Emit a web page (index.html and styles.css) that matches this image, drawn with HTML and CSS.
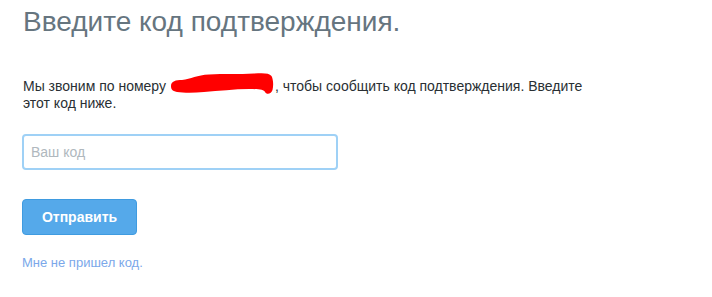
FILE: index.html
```html
<!DOCTYPE html>
<html lang="ru">
<head>
<meta charset="utf-8">
<title>Введите код подтверждения</title>
<link rel="stylesheet" href="styles.css">
</head>
<body>
<main class="page">
  <h1 class="title">Введите код подтверждения.</h1>
  <p class="lead">Мы звоним по номеру <span class="redact"><svg class="redact-mark" width="108" height="26" viewBox="0 0 108 26" aria-hidden="true"><path d="M2,15 C2,10 7,9 13,9 C22,8 28,4 40,3.5 C55,2.5 70,3.5 85,2.5 C95,2 100,2 102.5,5 C104.5,9 104.5,15 103.5,19 C102.5,23 97.5,24 96,21 C95,18.5 90,18 80,18 C65,18 50,20 35,21 C25,22 15,22 8,21 C3,20 2,18 2,15 Z" fill="#ff0000"/></svg></span>, чтобы сообщить код подтверждения. Введите этот код ниже.</p>
  <div class="field"><input class="code-input" type="text" placeholder="Ваш код" autofocus></div>
  <div class="actions"><button class="submit" type="button">Отправить</button></div>
  <a class="resend" href="#">Мне не пришел код.</a>
</main>
</body>
</html>
```

FILE: styles.css
```css
html, body {
  margin: 0;
  padding: 0;
  background: #ffffff;
}

body {
  font-family: "Liberation Sans", Arial, sans-serif;
  color: #292f33;
}

.page {
  padding: 6px 22px 0 22px;
  display: flex;
  flex-direction: column;
  align-items: flex-start;
}

.title {
  margin: 0 0 0 1px;
  font-size: 28px;
  line-height: 32px;
  font-weight: normal;
  color: #66757f;
}

.lead {
  margin: 40px 0 0 1px;
  width: 570px;
  font-size: 14px;
  line-height: 17px;
  color: #292f33;
}

.redact {
  display: inline-block;
  position: relative;
  width: 105px;
  height: 14px;
  vertical-align: -2px;
}

.redact-mark {
  position: absolute;
  left: -1px;
  top: -8px;
}

.field {
  margin-top: 22px;
}

.code-input {
  box-sizing: border-box;
  width: 316px;
  height: 36px;
  margin: 0;
  padding: 0 7px;
  border: 2px solid #9fd1f6;
  border-radius: 4px;
  outline: none;
  font-family: "Liberation Sans", Arial, sans-serif;
  font-size: 14px;
  color: #292f33;
  background: #ffffff;
}

.code-input::placeholder {
  color: #b0b8be;
}

.actions {
  margin-top: 29px;
}

.submit {
  box-sizing: border-box;
  width: 115px;
  height: 36px;
  margin: 0;
  padding: 0;
  border: 1px solid #3f9be0;
  border-radius: 4px;
  background: #55a9ea;
  color: #ffffff;
  font-family: "Liberation Sans", Arial, sans-serif;
  font-size: 14px;
  font-weight: bold;
  cursor: pointer;
}

.resend {
  margin-top: 20px;
  font-size: 13px;
  line-height: 16px;
  color: #7ba8ea;
  text-decoration: none;
}
```
